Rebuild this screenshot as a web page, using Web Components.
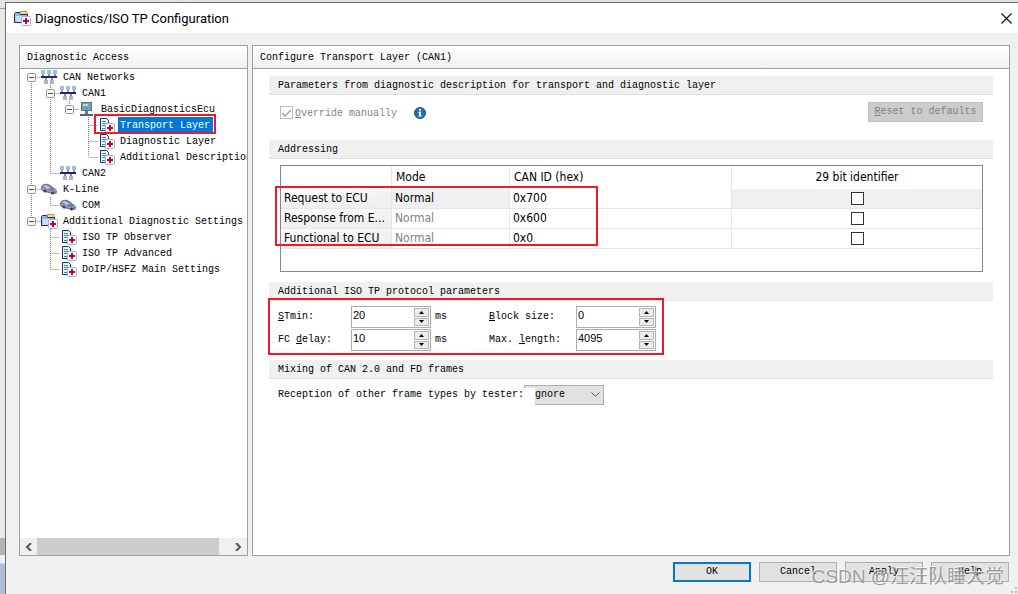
<!DOCTYPE html>
<html lang="en">
<head>
<meta charset="utf-8">
<title>Diagnostics/ISO TP Configuration</title>
<style>
html,body{margin:0;height:100%}
body{font:10px/16px "Liberation Mono","Noto Sans CJK SC",monospace;color:#000;background:linear-gradient(#e2e2e2 0 8px,#9a9a9a 8px 9px,#e9e9e9 9px 538px,#b4b4b4 538px 555px,#f0f0f0 555px 563px,#aebdd3 564px);overflow:hidden}
</style>
</head>
<body>
<config-dialog></config-dialog>
<script>
const define=(name,html,setup)=>customElements.define(name,class extends HTMLElement{
  connectedCallback(){
    if(this.shadowRoot)return;
    const t=document.createElement('template');
    t.innerHTML=typeof html==='function'?html(this):html;
    this.attachShadow({mode:'open'}).append(t.content.cloneNode(true));
    if(setup)setup(this,this.shadowRoot);
  }
});

const cross='<rect x="7.5" y="6.5" width="9" height="9" rx="1" fill="#fff" stroke="#9fb2d0"/><path d="M12 8v6M9 11h6" stroke="#c3002f" stroke-width="2"/>';
const icons={
  can:'<path d="M2 4v4M8 4v4M14 4v4M5 8v4M11 8v4" stroke="#24246c"/><path d="M0 8h16" stroke="#24246c" stroke-width="2"/><path d="M0 1h4v4H0zM6 1h4v4H6zM12 1h4v4h-4z" fill="#9cc0e0"/><path d="M3 11h4v4H3zM9 11h4v4H9z" fill="#aab6c0"/>',
  ecu:'<rect x="2" y="1" width="11" height="9" fill="#5e717d"/><rect x="3" y="2" width="9" height="7" fill="#6fa3bd"/><path d="M4 3h5v2H4z" fill="#b4d8e8"/><path d="M7.500 10v4" stroke="#6c7a82" stroke-width="3"/><path d="M1 14h13" stroke="#55636c" stroke-width="2"/>',
  page:'<path d="M2.500 1.500h6l2 2v10h-8z" fill="#eef6ff" stroke="#24246c"/><path d="M4 4.500h4M4 6.500h5M4 8.500h4M4 11.500h3" stroke="#2f86c6"/>'+cross,
  car:'<path d="M0 6C1 3 4 2 7 3c3 1 4 2 6 4 2 1 3 2 3 4 0 2-2 2-4 2C8 12 1 11 0 8z" fill="#74789a"/><path d="M2 5l3-1 5 3-4 1z" fill="#c2c8dc"/><path d="M1 7l10 4 4-2" stroke="#aeb2ca" fill="none"/><circle cx="4" cy="10" r="1.500" fill="#3d3f58"/><circle cx="11.500" cy="12" r="1.500" fill="#3d3f58"/>',
  folder:'<path d="M6 3V1.500h7V5" fill="#ffd867" stroke="#c99a2e"/><path d="M.5 12.500V3.500l1-1h4l1 2h7v8z" fill="#8fbbe6" stroke="#24246c"/><path d="M1.500 6h11.500v6H1.500z" fill="#c6e0f7"/>'+cross
};
define('ui-icon',h=>`<style>:host{display:block;width:17px;height:16px;flex:none}svg{display:block}</style><svg width="17" height="16" viewBox="0 0 17 16" fill="none" aria-hidden="true">${icons[h.getAttribute('name')]}</svg>`);

/* One row of the tree. guides: r = first branch, t = tee, l = last branch, | = passing line, . = nothing */
define('tree-row',h=>{
  const g=h.getAttribute('guides');
  const line=c=>({'|':'M9.500 0V16',t:'M9.500 0V16M9.500 8.500H19',l:'M9.500 0V8M9.500 8.500H19',r:'M9.500 8V16M9.500 8.500H19','.':''})[c];
  const box=h.hasAttribute('open')?'<rect x="5.500" y="4.500" width="8" height="8" rx="1" fill="#f8f8f8" stroke="#919191"/><path d="M7 8.500h5" stroke="#3a4fa0"/>':'';
  return `<style>
  :host{display:flex;height:16px;align-items:center;white-space:nowrap}
  svg{display:block;flex:none}
  a{color:inherit;text-decoration:none;height:16px;line-height:18px;padding:0 3px 0 2px;margin-left:3px}
  :host([selected]) a{background:#0078d7;color:#fff}
  </style>${[...g].map((c,i)=>`<svg width="19" height="16" aria-hidden="true"><path d="${line(c)}" stroke="#808080" stroke-dasharray="1 1"/>${i===g.length-1?box:''}</svg>`).join('')}<ui-icon name="${h.getAttribute('icon')}"></ui-icon><a href="#"><slot></slot></a>`;
});

define('ui-panel',`<style>
:host{display:flex;flex-direction:column;border:1px solid #a0a0a0;background:#fff;min-width:0;box-sizing:border-box}
h2{font:inherit;margin:0;height:22px;line-height:24px;padding:0 7px;border-bottom:1px solid #a0a0a0;background:linear-gradient(#fff,#f0f0f0)}
div{flex:1;min-height:0;display:flex;flex-direction:column}
</style><h2><slot name="title"></slot></h2><div><slot></slot></div>`);

define('h-scrollbar',`<style>
:host{display:flex;height:17px;background:#f0f0f0}
button{border:0;background:none;width:17px;padding:0;flex:none}
div{flex:1;padding-right:1px;display:flex}
i{width:95%;background:#cdcdcd}
svg{display:block;margin:auto}
</style><button aria-label="Scroll left"><svg width="7" height="8"><path d="M6 0L2 4l4 4" fill="none" stroke="#555" stroke-width="2"/></svg></button><div><i></i></div><button aria-label="Scroll right"><svg width="7" height="8"><path d="M1 0l4 4-4 4" fill="none" stroke="#555" stroke-width="2"/></svg></button>`);

define('section-bar',`<style>
:host{display:block;height:18px;background:#f0f0f0;border-bottom:1px solid #e0e0e0}
h3{font:inherit;line-height:20px;margin:0;padding-left:9px}
</style><h3><slot></slot></h3>`);

/* Red frame that highlights a region; its box comes from the custom properties of its user. */
define('mark-frame',`<style>:host{position:absolute;inset:var(--inset);border:2px solid #ed1c24;pointer-events:none;z-index:2}</style>`);

define('push-button',h=>`<style>
:host{display:block}
button{font:inherit;color:#000;width:100%;height:20px;padding:0;background:#e1e1e1;border:1px solid #adadad;display:block;line-height:18px}
:host([primary]) button{border:2px solid #0078d7;line-height:16px}
button:disabled{background:#ccc;border-color:#bfbfbf;color:#838383}
</style><button ${h.hasAttribute('disabled')?'disabled':''}><slot></slot></button>`);

define('spin-field',h=>`<style>
:host{display:contents}
label{align-self:center}
.box{display:flex;height:22px;box-sizing:border-box;border:1px solid #abadb3;background:#fff}
input{flex:1;min-width:0;border:0;outline:0;padding:0 0 4px 1px;background:none;font:11px "Liberation Sans",sans-serif;color:#000}
.b{width:15px;display:flex;flex-direction:column;gap:1px;padding:1px 1px 1px 0}
button{flex:1;min-height:0;padding:0;border:1px solid #b4b4b4;background:#ececec;display:flex;align-items:center;justify-content:center}
.u{align-self:center;padding-left:4px}
</style><label for="f"><slot></slot></label><div class="box"><input id="f" type="text" inputmode="numeric" value="${h.getAttribute('value')}"><div class="b"><button aria-label="Increase"><svg width="5" height="3"><path d="M0 3L2.500 0 5 3z"/></svg></button><button aria-label="Decrease"><svg width="5" height="3"><path d="M0 0h5L2.500 3z"/></svg></button></div></div>${h.hasAttribute('unit')?`<span class="u">${h.getAttribute('unit')}</span>`:''}`);

define('address-table',()=>{
  const rows=[['Request to ECU','0x700'],['Response from E...','0x600'],['Functional to ECU','0x0']];
  return `<style>
  :host{display:block;height:105px;border:1px solid #828790;background:#fff;font:12px "DejaVu Sans Condensed","DejaVu Sans",sans-serif}
  table{width:100%;border-collapse:separate;border-spacing:0;table-layout:fixed}
  th,td{box-sizing:border-box;height:20px;padding:0 3px;text-align:left;font-weight:400;line-height:19px;border-right:1px solid #e6e6e6;border-bottom:1px solid #e6e6e6;white-space:nowrap;overflow:hidden}
  thead th{height:23px;border-bottom:0;padding:0 4px;line-height:23px}
  tr>:last-child{border-right:0;text-align:center}
  tbody th{background:linear-gradient(90deg,#fff0 20%,#eee8),linear-gradient(#fcfcfc,#eee)}
  td:nth-child(2){color:#808080}
  tr.on td:nth-child(2){color:#000}
  tr.on td:nth-child(2),tr.on td:last-child{background:#f0f0f0}
  input{appearance:none;box-sizing:border-box;width:13px;height:13px;border:1px solid #333;background:#fff;display:block;margin:0 auto}
  .a{width:111px}.b{width:118px}.c{width:222px}
  </style><table><colgroup><col class="a"><col class="b"><col class="c"><col></colgroup><thead><tr><th></th><th>Mode</th><th>CAN ID (hex)</th><th>29 bit identifier</th></tr></thead><tbody>${rows.map((r,i)=>`<tr class="${i?'':'on'}"><th>${r[0]}</th><td>Normal</td><td>${r[1]}</td><td><input type="checkbox" aria-label="29 bit identifier, ${r[0]}"></td></tr>`).join('')}</tbody></table>`;
});

define('access-tree',`<style>
:host{display:flex;flex-direction:column;flex:1;min-height:0}
.t{flex:1;overflow:hidden;padding-left:2px}
.m{position:relative}
</style><div class="t">
<tree-row guides="r" open icon="can">CAN Networks</tree-row>
<tree-row guides="|t" open icon="can">CAN1</tree-row>
<tree-row guides="||l" open icon="ecu">BasicDiagnosticsEcu</tree-row>
<div class="m"><tree-row guides="||.t" icon="page" selected>Transport Layer</tree-row><mark-frame style="--inset:-3px 31px -1px 72px"></mark-frame></div>
<tree-row guides="||.t" icon="page">Diagnostic Layer</tree-row>
<tree-row guides="||.l" icon="page">Additional Description</tree-row>
<tree-row guides="|l" icon="can">CAN2</tree-row>
<tree-row guides="t" open icon="car">K-Line</tree-row>
<tree-row guides="|l" icon="car">COM</tree-row>
<tree-row guides="l" open icon="folder">Additional Diagnostic Settings</tree-row>
<tree-row guides=".t" icon="page">ISO TP Observer</tree-row>
<tree-row guides=".t" icon="page">ISO TP Advanced</tree-row>
<tree-row guides=".l" icon="page">DoIP/HSFZ Main Settings</tree-row>
</div><h-scrollbar></h-scrollbar>`);

define('transport-form',`<style>
:host{display:block;padding:7px 16px 0}
.over{display:flex;align-items:center;height:45px;padding:0 10px 0 11px;box-sizing:border-box;color:#838383}
.over input{appearance:none;width:13px;height:13px;box-sizing:border-box;border:1px solid #bcbcbc;margin:0 2px 10px 0;background:#fff}
.over label{margin-bottom:8px}
.over .info{margin-bottom:10px}
.over .ck{position:relative;display:flex}
.ck svg{position:absolute;left:2px;top:3px}
.info{margin-left:17px;margin-right:auto}
push-button{width:115px;margin-bottom:12px}
.addr{position:relative;padding:6px 10px 10px 11px}
.params{position:relative;display:grid;grid-template-columns:73px 80px 58px 87px 80px;row-gap:1px;padding:5px 0 9px 9px}
.mix{display:flex;align-items:center;padding:6px 0 0 9px}
.sel{position:relative}
select{appearance:none;display:block;font:inherit;color:#000;width:80px;height:20px;border:1px solid #adadad;border-radius:0;background:#e1e1e1;padding:0 0 0 4px;margin:0}
.sel svg{position:absolute;right:4px;top:7px}
.patch{position:absolute;left:0;top:3px;bottom:0;width:11px;background:#fff}
</style>
<section-bar>Parameters from diagnostic description for transport and diagnostic layer</section-bar>
<div class="over"><span class="ck"><input id="o" type="checkbox" checked disabled><svg width="9" height="8"><path d="M0 4l3 3 6-6" fill="none" stroke="#a0a0a0" stroke-width="1.400"/></svg></span><label for="o"><u>O</u>verride manually</label>
<svg class="info" width="12" height="12" viewBox="0 0 12 12" role="img" aria-label="Information"><circle cx="6" cy="6" r="5.600" fill="#1c6fb8" stroke="#114b86" stroke-width=".8"/><path d="M5 2h2v1.800H5zM4.300 4.800H7V8.500h.8v1H4.300v-1H5V5.800h-.7z" fill="#fff"/></svg>
<push-button disabled><u>R</u>eset to defaults</push-button></div>
<section-bar>Addressing</section-bar>
<div class="addr"><address-table></address-table><mark-frame style="--inset:27px auto 36px 6px;width:319px"></mark-frame></div>
<section-bar>Additional ISO TP protocol parameters</section-bar>
<div class="params">
<spin-field value="20" unit="ms"><u>S</u>Tmin:</spin-field><spin-field value="0"><u>B</u>lock size:</spin-field>
<spin-field value="10" unit="ms">FC <u>d</u>elay:</spin-field><spin-field value="4095">Max. <u>l</u>ength:</spin-field>
<mark-frame style="--inset:-3px auto 5px -1px;width:392px"></mark-frame></div>
<section-bar>Mixing of CAN 2.0 and FD frames</section-bar>
<div class="mix"><label for="s">Reception of other frame types by tester:</label><div class="sel"><select id="s"><option>Ignore</option></select><svg width="9" height="6"><path d="M.5.5l4 4 4-4" fill="none" stroke="#555"/></svg><span class="patch"></span></div></div>`);

define('config-dialog',`<style>
:host{display:flex;flex-direction:column;height:100vh;box-sizing:border-box;padding:2px 0 0 5px}
.win{flex:1;display:flex;flex-direction:column;border:solid #6e6e6e;border-width:1px 0 0 1px;background:#f0f0f0;min-height:0;position:relative}
header{display:flex;align-items:center;height:30px;background:#fff;padding:0 6px 0 8px}
h1{flex:1;margin:0 0 0 4px;font:13px "Roboto",sans-serif}
header button{border:0;background:none;padding:0;display:flex}
main{flex:1;min-height:0;display:grid;grid-template-columns:229px 1fr;gap:4px;padding:12px 8px 0 13px}
footer{display:flex;justify-content:flex-end;gap:8px;padding:6px 9px 12px}
footer push-button{width:78px}
.wm{position:absolute;right:14px;bottom:1px;font:19px/32px "Liberation Sans","Noto Sans CJK SC",sans-serif;color:#8c8c8cd0;text-shadow:-1px -1px 0 #ffffffb0;white-space:nowrap;pointer-events:none}
.grip{position:absolute;right:1px;bottom:1px}
</style><div class="win"><header><ui-icon name="folder"></ui-icon><h1>Diagnostics/ISO TP Configuration</h1><button aria-label="Close"><svg width="11" height="11"><path d="M.5.5l10 10M10.500.5l-10 10" stroke="#111" stroke-width="1.200"/></svg></button></header>
<main><ui-panel><span slot="title">Diagnostic Access</span><access-tree></access-tree></ui-panel><ui-panel><span slot="title">Configure Transport Layer (CAN1)</span><transport-form></transport-form></ui-panel></main>
<footer><push-button primary>OK</push-button><push-button>Cancel</push-button><push-button>Apply</push-button><push-button>Help</push-button></footer>
<span class="wm">CSDN @汪汪队睡大觉</span>
<svg class="grip" width="6" height="6"><path d="M4 0h2v2H4zM4 4h2v2H4zM0 4h2v2H0z" fill="#bbb"/></svg></div>`);
</script>
</body>
</html>
